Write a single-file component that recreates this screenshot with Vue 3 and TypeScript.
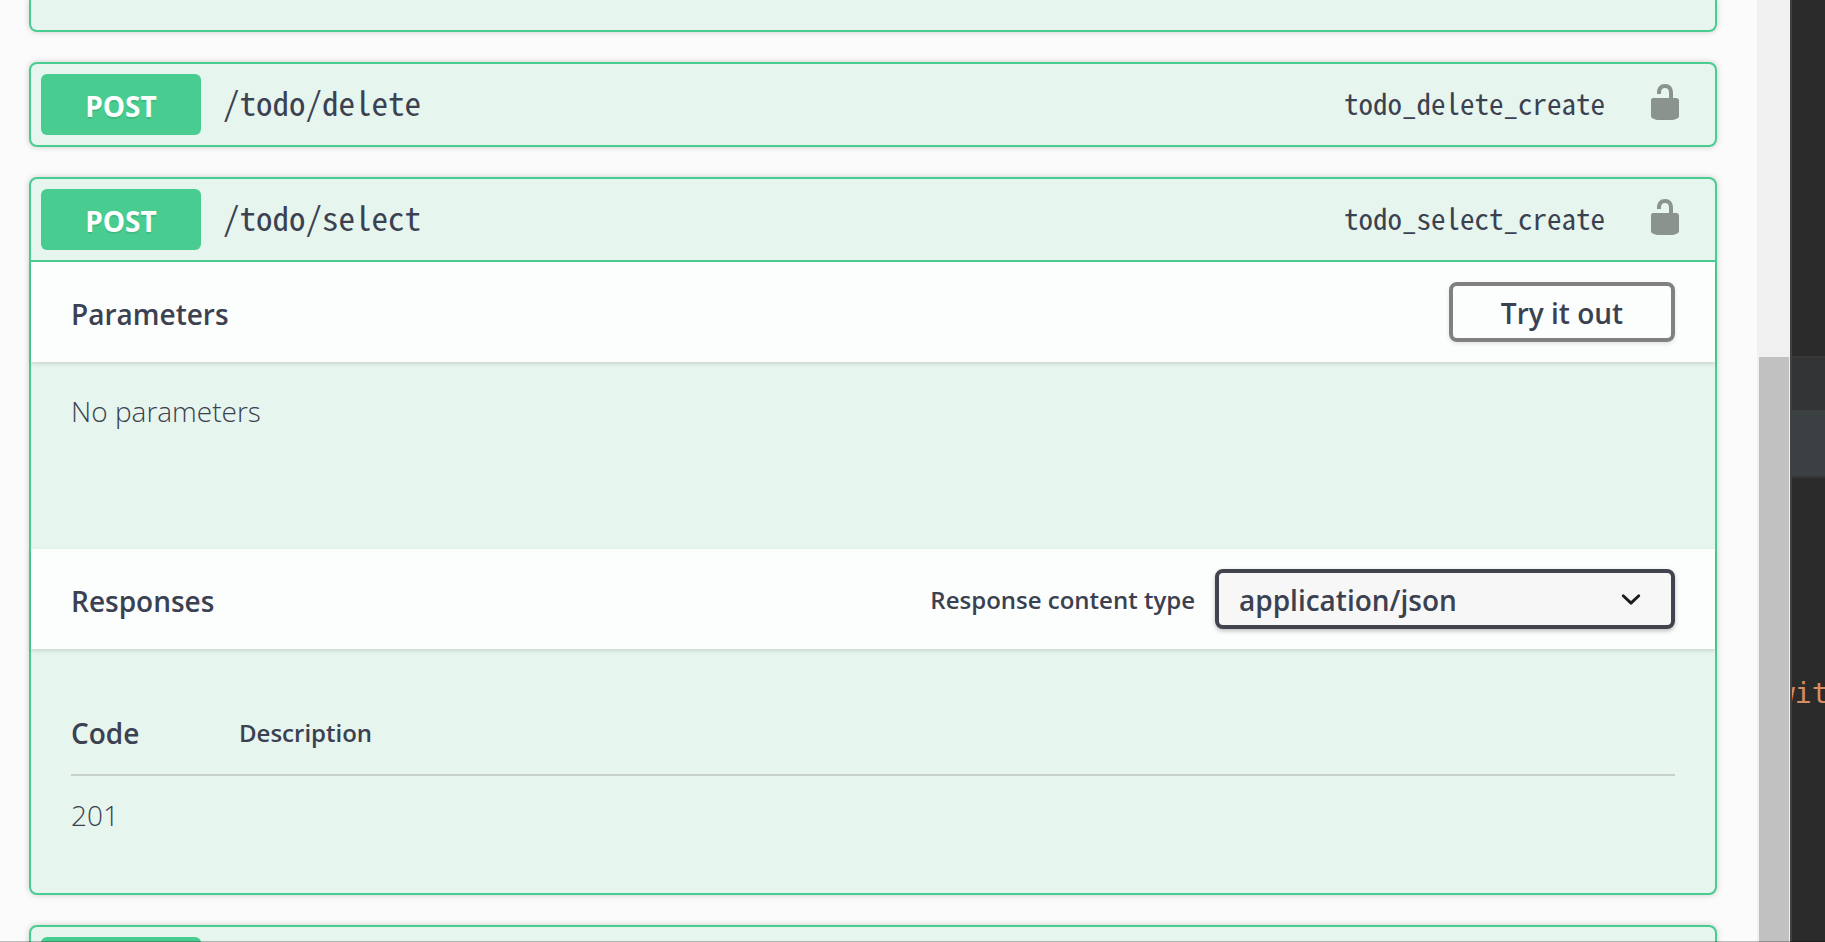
<script setup lang="ts">
import { ref } from 'vue'

interface Operation {
  path: string
  id: string
  open: boolean
}

const operations = ref<Operation[]>([
  { path: '/todo/delete', id: 'todo_delete_create', open: false },
  { path: '/todo/select', id: 'todo_select_create', open: true },
])

const contentTypes: string[] = ['application/json']
const contentType = ref(contentTypes[0])
const responses: { code: string; description: string }[] = [{ code: '201', description: '' }]
</script>

<template>
  <div class="screen">
    <main class="docs">
      <section class="block block-above"></section>

      <section v-for="op in operations" :key="op.id" class="block">
        <header class="summary" :class="{ 'summary-open': op.open }">
          <button type="button" class="method" @click="op.open = !op.open">POST</button>
          <span class="path">{{ op.path }}</span>
          <span class="op-id">{{ op.id }}</span>
          <button type="button" class="lock" aria-label="Authorize">
            <svg viewBox="0 0 20 20" aria-hidden="true">
              <path
                d="M15.8 8H14V5.6C14 2.703 12.665 1 10 1 7.334 1 6 2.703 6 5.6V6h2v-.801C8 3.754 8.797 3 10 3c1.203 0 2 .754 2 2.199V8H4c-.553 0-1 .646-1 1.199V17c0 .549.428 1.139.951 1.307l1.197.387C5.672 18.861 6.55 19 7.1 19h5.8c.549 0 1.428-.139 1.951-.307l1.196-.387c.524-.167.953-.757.953-1.306V9.199C17 8.646 16.352 8 15.8 8z"
              />
            </svg>
          </button>
        </header>

        <div v-if="op.open">
          <div class="bar">
            <h4 class="heading">Parameters</h4>
            <button type="button" class="try">Try it out</button>
          </div>
          <p class="empty">No parameters</p>

          <div class="bar">
            <h4 class="heading">Responses</h4>
            <label class="type-label" for="content-type">Response content type</label>
            <div class="select-wrap">
              <select id="content-type" v-model="contentType" class="select">
                <option v-for="t in contentTypes" :key="t" :value="t">{{ t }}</option>
              </select>
              <svg class="chevron" viewBox="0 0 20 20" aria-hidden="true">
                <path
                  d="M13.418 7.859a.695.695 0 0 1 .978 0 .68.68 0 0 1 0 .969l-3.908 3.83a.697.697 0 0 1-.979 0l-3.908-3.83a.68.68 0 0 1 0-.969.695.695 0 0 1 .978 0L10 11l3.418-3.141z"
                />
              </svg>
            </div>
          </div>
          <div class="responses">
            <table class="table">
              <thead>
                <tr>
                  <th class="col-code" scope="col">Code</th>
                  <th class="col-desc" scope="col">Description</th>
                </tr>
              </thead>
              <tbody>
                <tr v-for="r in responses" :key="r.code">
                  <td>{{ r.code }}</td>
                  <td>{{ r.description }}</td>
                </tr>
              </tbody>
            </table>
          </div>
        </div>
      </section>

      <section class="block">
        <header class="summary">
          <button type="button" class="method" aria-label="Expand operation"></button>
        </header>
      </section>
    </main>

    <div class="scrollbar"><div class="thumb"></div></div>

    <aside class="editor">
      <div class="band band-tool"></div>
      <div class="band band-tab"></div>
      <code class="code">wit</code>
    </aside>
  </div>
</template>

<style>
body {
  margin: 0;
  overflow: hidden;
}
</style>

<style scoped>
* {
  box-sizing: border-box;
}

.screen {
  position: relative;
  display: flex;
  height: 100vh;
  overflow: hidden;
  background: #fafbfa;
  color: #3b4151;
  font-family: 'Open Sans', 'Noto Sans', sans-serif;
  font-size: 28px;
  line-height: 40px;
}

.screen::after {
  content: '';
  position: absolute;
  inset: auto 0 0;
  height: 1px;
  background: rgba(0, 0, 0, 0.26);
}

.docs {
  flex: 1;
  min-width: 0;
  display: flex;
  flex-direction: column;
  gap: 30px;
  padding: 0 40px 0 29px;
}

.block {
  flex: none;
  border: 2px solid #49cc90;
  border-radius: 8px;
  background: #e6f5ed;
  box-shadow: 0 0 6px rgba(0, 0, 0, 0.19);
}

.block-above {
  height: 32px;
  border-top: 0;
  border-radius: 0 0 8px 8px;
}

.summary {
  display: flex;
  align-items: center;
  padding: 10px;
}

.summary-open {
  border-bottom: 2px solid #49cc90;
}

.method {
  width: 160px;
  height: 61px;
  padding: 2px 0 0;
  border: 0;
  border-radius: 6px;
  background: #49cc90;
  color: #fff;
  font: inherit;
  font-weight: 700;
  text-shadow: 0 2px 0 rgba(0, 0, 0, 0.1);
}

.path,
.op-id {
  padding-bottom: 6px;
  font-family: 'Noto Sans CJK KR', 'Liberation Mono', monospace;
  font-feature-settings: 'hwid';
}

.path {
  flex: 1;
  padding-left: 22px;
  font-size: 33px;
}

.op-id {
  font-size: 29px;
}

.lock {
  align-self: flex-start;
  width: 40px;
  height: 40px;
  margin: 8px 20px 0 40px;
  padding: 0;
  border: 0;
  background: none;
}

.lock svg {
  display: block;
  width: 40px;
  height: 40px;
  fill: #8b938e;
}

.bar {
  display: flex;
  align-items: center;
  height: 100px;
  padding: 0 40px;
  background: #fcfefd;
  box-shadow: 0 2px 4px rgba(0, 0, 0, 0.12);
}

.heading {
  flex: 1;
  margin: 0;
  padding-top: 4px;
  font-size: 28px;
  font-weight: 600;
}

.try {
  width: 226px;
  height: 60px;
  padding: 2px 0 0;
  border: 4px solid #808080;
  border-radius: 8px;
  background: transparent;
  box-shadow: 0 2px 4px rgba(0, 0, 0, 0.1);
  color: inherit;
  font: inherit;
  font-weight: 600;
}

.empty {
  margin: 0;
  padding: 29px 40px 118px;
  font-weight: 300;
}

.type-label {
  margin-right: 20px;
  padding-top: 2px;
  font-size: 24px;
  font-weight: 600;
}

.select-wrap {
  position: relative;
  width: 460px;
}

.select {
  display: block;
  width: 100%;
  height: 60px;
  padding: 2px 80px 0 20px;
  appearance: none;
  border: 4px solid #41444e;
  border-radius: 8px;
  background: #f7f7f7;
  box-shadow: 0 2px 4px rgba(0, 0, 0, 0.25);
  color: inherit;
  font: inherit;
  font-weight: 600;
}

.chevron {
  position: absolute;
  top: 10px;
  right: 24px;
  width: 40px;
  height: 40px;
  fill: #1c1c1c;
  pointer-events: none;
}

.responses {
  padding: 40px;
}

.table {
  width: 100%;
  border-collapse: collapse;
}

.table th {
  padding: 24px 0 21px;
  border-bottom: 2px solid #c5d0cc;
  text-align: left;
  font-weight: 600;
}

.table td {
  padding: 19px 0 18px;
  font-weight: 300;
}

.table .col-code {
  width: 168px;
}

.table .col-desc {
  font-size: 24px;
}

.scrollbar {
  width: 33px;
  height: 100%;
  padding: 357px 1px 0 2px;
  background: #f0f0f0;
}

.thumb {
  height: 100%;
  background: #c1c1c1;
}

.editor {
  width: 35px;
  overflow: hidden;
  padding-top: 356px;
  border-left: 2px solid #414141;
  background: #2b2b2b;
}

.band-tool {
  height: 54px;
  border-top: 2px solid #38393a;
  background: #313335;
}

.band-tab {
  height: 68px;
  border-bottom: 2px solid #333536;
  background: #3b4042;
}

.code {
  display: block;
  margin: 196px 0 0 -14px;
  color: #d88c62;
  font-family: 'DejaVu Sans Mono', monospace;
  font-size: 28px;
  line-height: 40px;
}
</style>
